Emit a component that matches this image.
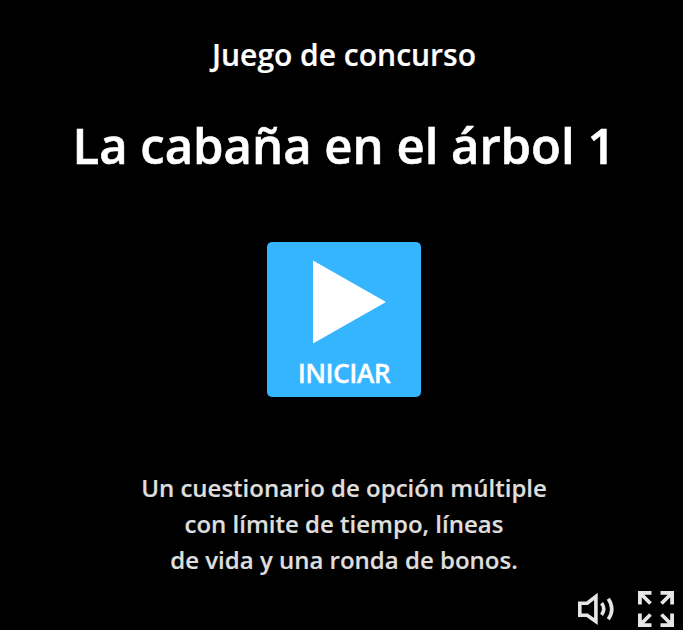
<main>
  <h2>Juego de concurso</h2>
  <h1>La cabaña en el árbol 1</h1>
  <button class="start" type="button">
    <svg width="74" height="84" viewBox="0 0 74 84"><path d="M0 0.5 73 42 0 83.5Z" fill="#fff" /></svg>
    <span>INICIAR</span>
  </button>
  <p>Un cuestionario de opción múltiple<br />con límite de tiempo, líneas<br />de vida y una ronda de bonos.</p>
  <div class="controls">
    <svg width="38" height="36" viewBox="0 0 38 36" fill="none" stroke="#e6e6e6" stroke-width="3.6"><path d="M1.8 12.2H9.2L17.9 5.4V30.4L9.2 24.2H1.8Z" /><path d="M23.6 12.2Q28 18 23.6 23.8M30.3 7.7Q37.3 18 30.3 28.3" /></svg>
    <svg width="36" height="36" viewBox="0 0 36 36" fill="none" stroke="#e6e6e6" stroke-width="3.8"><path d="M1.9 13.5V1.9H13.5M2 2 12.5 12.5M22.5 1.9H34.1V13.5M34 2 23.5 12.5M1.9 22.5V34.1H13.5M2 34 12.5 23.5M22.5 34.1H34.1V22.5M34 34 23.5 23.5" /></svg>
  </div>
</main>

<style>
  :global(body) { margin: 0; background: #000; }
  main { box-sizing: border-box; height: 630px; padding: 32px 0 0 5px; display: flex; flex-direction: column; align-items: center; background: #000; color: #fff; font-family: "Open Sans", sans-serif; font-weight: 600; overflow: hidden; -webkit-text-stroke: 0.2px currentColor; }
  h2 { margin: 0; font-size: 30px; line-height: 46px; font-weight: 600; white-space: nowrap; }
  h1 { margin: 31px 0 0; font-size: 49px; line-height: 72px; font-weight: 600; white-space: nowrap; -webkit-text-stroke: 0.6px currentColor; }
  .start { margin: 61px 0 0; padding: 18px 0 0; width: 154px; height: 155px; border: 0; border-radius: 5px; background: #36b5ff; color: #fff; font: inherit; display: flex; flex-direction: column; align-items: center; flex: none; -webkit-text-stroke: 0.3px currentColor; }
  .start svg { margin-left: 11px; }
  .start span { font-size: 26.6px; line-height: 36px; letter-spacing: -0.6px; margin-top: 11px; }
  p { margin: 73px 0 0; font-size: 24px; line-height: 36px; color: #dedede; text-align: center; white-space: nowrap; }
  .controls { align-self: flex-end; display: flex; align-items: center; gap: 22px; margin: 13px 9px 0 0; }
  svg { display: block; }
</style>
